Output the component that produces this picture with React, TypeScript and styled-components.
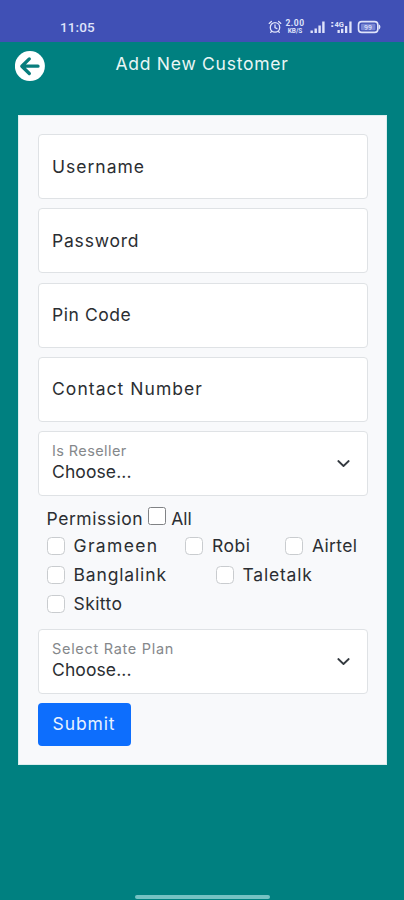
import React from 'react';
import styled, { createGlobalStyle } from 'styled-components';

const GlobalStyle = createGlobalStyle`
  * { box-sizing: border-box; }
  html, body { margin: 0; background: #008080; }
  body { font-family: Inter, "Open Sans", sans-serif; font-weight: 400; color: #2b2e32; overflow: hidden; }
`;

const Screen = styled.main`
  width: 404px;
  height: 900px;
  display: flex;
  flex-direction: column;
  background: #008080;
  overflow: hidden;
`;

const StatusBar = styled.div`
  height: 42px;
  flex: none;
  display: flex;
  align-items: center;
  justify-content: space-between;
  padding: 11px 23px 0 60px;
  background: #4050b5;
  color: #dfe3fa;
`;

const Clock = styled.span`
  font: 500 13.5px/16px Roboto, sans-serif;
  letter-spacing: 0.1px;
`;

const StatusIcons = styled.div`
  display: flex;
  align-items: center;
`;

const NetSpeed = styled.div`
  width: 20px;
  margin: 0 4px 0 3px;
  display: flex;
  flex-direction: column;
  align-items: center;
  font: 700 8.5px/8px Roboto, sans-serif;
  letter-spacing: 0.5px;
`;

const NetUnit = styled.span`
  font-size: 6.5px;
  line-height: 8px;
  letter-spacing: 0;
`;

const Header = styled.header`
  height: 73px;
  flex: none;
  display: grid;
  grid-template-columns: 30px 1fr 30px;
  align-items: start;
  padding: 8.5px 14.5px 0;
`;

const Title = styled.h1`
  margin: 0;
  text-align: center;
  color: #e9f6f5;
  font-weight: 400;
  font-size: 17.5px;
  line-height: 26px;
  letter-spacing: 0.74px;
  white-space: nowrap;
`;

const IconButton = styled.button`
  width: 31px;
  height: 31px;
  padding: 0;
  border: 0;
  background: none;
  svg { display: block; }
`;

const Card = styled.form`
  width: 369px;
  height: 650px;
  flex: none;
  margin-left: 18px;
  padding: 18px 18.5px;
  background: #f8f9fb;
  border: 1px solid #dceeee;
`;

const Field = styled.label`
  height: 65px;
  margin-bottom: 9.25px;
  display: flex;
  align-items: center;
  justify-content: space-between;
  padding: 0 17px 0 13.5px;
  background: #fff;
  border: 1.4px solid #dfe2e5;
  border-radius: 4px;
`;

const SelectText = styled.span`
  display: flex;
  flex-direction: column;
  padding-bottom: 2px;
`;

const Text = styled.span<{ $tracking: number }>`
  font-size: 17.5px;
  line-height: 24px;
  letter-spacing: ${(p) => p.$tracking}px;
  white-space: nowrap;
`;

const Caption = styled(Text)`
  font-size: 14.5px;
  line-height: 19px;
  color: #85888b;
`;

const Permissions = styled.section`
  height: 123.5px;
  padding: 1px 0 0 9px;
`;

const PermissionRow = styled.div<{ $columns: string }>`
  height: 29.2px;
  display: grid;
  grid-template-columns: ${(p) => p.$columns};
  align-items: center;
`;

const PermissionHead = styled.div`
  height: 25px;
  display: flex;
  align-items: center;
  gap: 5px;
`;

const Option = styled.label`
  display: flex;
  align-items: center;
  gap: 9px;
`;

const Checkbox = styled.input.attrs({ type: 'checkbox' })<{ $dark?: boolean }>`
  appearance: none;
  flex: none;
  width: 18px;
  height: 18px;
  margin: ${(p) => (p.$dark ? '0 0 5px' : '0')};
  background: #fff;
  border: 1.3px solid ${(p) => (p.$dark ? '#808285' : '#c9cccf')};
  border-radius: ${(p) => (p.$dark ? 2.5 : 4.5)}px;
`;

const Submit = styled.button`
  display: block;
  width: 93px;
  height: 42.5px;
  padding: 0;
  border: 0;
  border-radius: 4px;
  background: #0d6efd;
  color: #e8f2ff;
  font-family: inherit;
`;

const HomeIndicator = styled.div`
  width: 135px;
  height: 4px;
  flex: none;
  margin: auto auto 1px 135px;
  border-radius: 2px;
  background: #75c2c3;
`;

const AlarmIcon = () => (
  <svg width="14" height="14" viewBox="0 0 14 14" fill="none" stroke="currentColor" strokeWidth="1.3" strokeLinecap="round">
    <circle cx="7" cy="7.4" r="4.7" />
    <path d="M7 5v2.7l1.9.9M1.2 3.4l2.2-2M12.8 3.4l-2.2-2M3.7 11.3l-1 1.1M10.3 11.3l1 1.1" />
  </svg>
);

const SignalIcon = () => (
  <svg width="21" height="14" viewBox="0 0 21 14" fill="currentColor">
    <path d="M1.5 10.5h2.4V13H1.5zM5.5 8.5h2.4V13H5.5zM9.4 5.5h2.4V13H9.4zM13.2 1.5h2.4V13h-2.4z" />
  </svg>
);

const MobileSignalIcon = () => (
  <svg width="27" height="14" viewBox="0 0 27 14" fill="currentColor">
    <path d="M1.3 2h2v1.6h-2zM1.3 5.3h2v1.6h-2zM7.5 10h2.3v3H7.5zM11 8.8h2.3V13H11zM15 6h2.3v7H15zM19.3 1.5h2.3V13h-2.3z" />
    <text x="4.5" y="7" fontFamily="Roboto" fontSize="7.5" fontWeight="700">4G</text>
  </svg>
);

const BatteryIcon = () => (
  <svg width="24" height="14" viewBox="0 0 24 14" fill="none">
    <rect x="1.5" y="1.6" width="19.3" height="10.8" rx="3.2" stroke="currentColor" strokeWidth="1.6" />
    <path d="M21.6 4.3c2.4.8 2.4 4.6 0 5.4z" fill="currentColor" />
    <rect x="4" y="3.8" width="14.4" height="6.4" rx="1" fill="#7886d3" />
    <text x="7" y="9.5" fontFamily="Roboto" fontSize="7" fontWeight="500" fill="#d9ddf8">99</text>
  </svg>
);

const BackIcon = () => (
  <svg width="31" height="31" viewBox="0 0 31 31" fill="none">
    <circle cx="14.9" cy="15.1" r="15" fill="#fff" />
    <path d="M23 15.2H7.5M14.3 7.9l-7.5 7.3 7.5 7.3" stroke="#087d7d" strokeWidth="3.3" strokeLinecap="round" strokeLinejoin="round" />
  </svg>
);

const ChevronIcon = () => (
  <svg width="13" height="9" viewBox="0 0 13 9" fill="none" stroke="#343a40" strokeWidth="1.8" strokeLinecap="round" strokeLinejoin="round">
    <path d="M1.3 2 6.5 7 11.7 2" />
  </svg>
);

const inputs = [
  { label: 'Username', tracking: 1 },
  { label: 'Password', tracking: 0.8 },
  { label: 'Pin Code', tracking: 0.55 },
  { label: 'Contact Number', tracking: 1.05 },
];

const permissionRows = [
  {
    columns: '138.5px 100px 1fr',
    options: [
      { label: 'Grameen', tracking: 1.35 },
      { label: 'Robi', tracking: 0.5 },
      { label: 'Airtel', tracking: 0.35 },
    ],
  },
  {
    columns: '169px 1fr',
    options: [
      { label: 'Banglalink', tracking: 0.85 },
      { label: 'Taletalk', tracking: 0.8 },
    ],
  },
  { columns: '1fr', options: [{ label: 'Skitto', tracking: 0.4 }] },
];

function SelectField({ label, tracking }: { label: string; tracking: number }) {
  return (
    <Field>
      <SelectText>
        <Caption $tracking={tracking}>{label}</Caption>
        <Text $tracking={0.1}>Choose...</Text>
      </SelectText>
      <ChevronIcon />
    </Field>
  );
}

export default function App() {
  return (
    <Screen>
      <GlobalStyle />
      <StatusBar>
        <Clock>11:05</Clock>
        <StatusIcons>
          <AlarmIcon />
          <NetSpeed>
            <span>2.00</span>
            <NetUnit>KB/S</NetUnit>
          </NetSpeed>
          <SignalIcon />
          <MobileSignalIcon />
          <BatteryIcon />
        </StatusIcons>
      </StatusBar>
      <Header>
        <IconButton aria-label="Back"><BackIcon /></IconButton>
        <Title>Add New Customer</Title>
      </Header>
      <Card>
        {inputs.map((f) => (
          <Field key={f.label}>
            <Text $tracking={f.tracking}>{f.label}</Text>
          </Field>
        ))}
        <SelectField label="Is Reseller" tracking={0.4} />
        <Permissions>
          <PermissionHead>
            <Text $tracking={0.55}>Permission</Text>
            <Checkbox $dark />
            <Text $tracking={0}>All</Text>
          </PermissionHead>
          {permissionRows.map((row) => (
            <PermissionRow key={row.columns} $columns={row.columns}>
              {row.options.map((o) => (
                <Option key={o.label}>
                  <Checkbox />
                  <Text $tracking={o.tracking}>{o.label}</Text>
                </Option>
              ))}
            </PermissionRow>
          ))}
        </Permissions>
        <SelectField label="Select Rate Plan" tracking={0.7} />
        <Submit type="button"><Text $tracking={0.9}>Submit</Text></Submit>
      </Card>
      <HomeIndicator />
    </Screen>
  );
}
